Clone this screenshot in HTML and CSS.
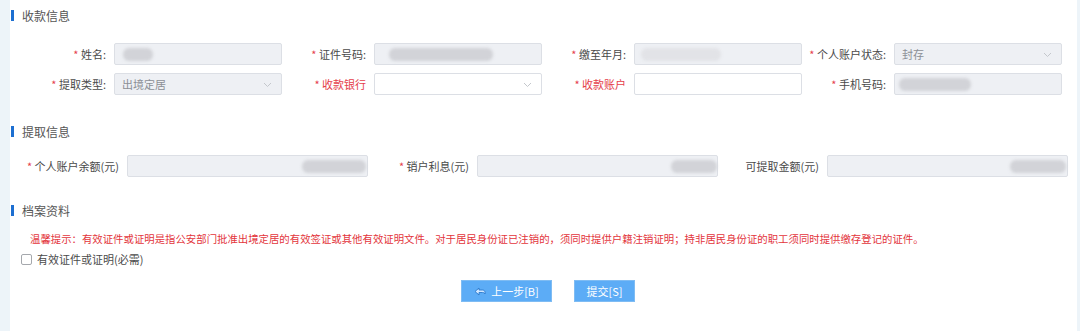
FILE: index.html
```html
<!DOCTYPE html>
<html lang="zh-CN">
<head>
    <meta charset="UTF-8">
    <title>提取申请</title>
    <link rel="stylesheet" href="styles.css">
</head>
<body>
    <div class="panel">
        <div class="sec-title">收款信息</div>
        <div class="grid4">
            <div class="field">
                <label><i>*</i> 姓名:</label>
                <div class="box disabled"><span class="blur" style="left:8px;width:30px"></span></div>
            </div>
            <div class="field">
                <label><i>*</i> 证件号码:</label>
                <div class="box disabled"><span class="blur" style="left:14px;width:104px"></span></div>
            </div>
            <div class="field">
                <label><i>*</i> 缴至年月:</label>
                <div class="box disabled"><span class="blur soft" style="left:6px;width:80px"></span></div>
            </div>
            <div class="field">
                <label><i>*</i> 个人账户状态:</label>
                <div class="box disabled select">封存<svg class="arrow" width="9" height="6" viewBox="0 0 9 6"><path d="M1 1l3.5 3.5L8 1" fill="none" stroke="#c4c7cc" stroke-width="1"/></svg></div>
            </div>
            <div class="field">
                <label><i>*</i> 提取类型:</label>
                <div class="box disabled select">出境定居<svg class="arrow" width="9" height="6" viewBox="0 0 9 6"><path d="M1 1l3.5 3.5L8 1" fill="none" stroke="#c4c7cc" stroke-width="1"/></svg></div>
            </div>
            <div class="field">
                <label class="red"><i>*</i> 收款银行</label>
                <div class="box select"><svg class="arrow" width="9" height="6" viewBox="0 0 9 6"><path d="M1 1l3.5 3.5L8 1" fill="none" stroke="#c4c7cc" stroke-width="1"/></svg></div>
            </div>
            <div class="field">
                <label class="red"><i>*</i> 收款账户</label>
                <div class="box"></div>
            </div>
            <div class="field">
                <label><i>*</i> 手机号码:</label>
                <div class="box disabled"><span class="blur" style="left:4px;width:72px"></span></div>
            </div>
        </div>

        <div class="sec-title second">提取信息</div>
        <div class="grid3">
            <div class="field">
                <label><i>*</i> 个人账户余额(元)</label>
                <div class="box disabled"><span class="blur" style="left:174px;width:64px"></span></div>
            </div>
            <div class="field">
                <label><i>*</i> 销户利息(元)</label>
                <div class="box disabled"><span class="blur" style="left:193px;width:46px"></span></div>
            </div>
            <div class="field">
                <label>可提取金额(元)</label>
                <div class="box disabled"><span class="blur" style="left:182px;width:56px"></span></div>
            </div>
        </div>

        <div class="sec-title third">档案资料</div>
        <p class="tip">温馨提示：有效证件或证明是指公安部门批准出境定居的有效签证或其他有效证明文件。对于居民身份证已注销的，须同时提供户籍注销证明；持非居民身份证的职工须同时提供缴存登记的证件。</p>
        <div class="check">
            <span class="checkbox"></span>
            <span>有效证件或证明(必需)</span>
        </div>

        <div class="actions">
            <button class="btn back" type="button">
                <svg width="12" height="10" viewBox="0 0 12 10"><path d="M1 5.5L5 2v2h3.5c1.5 0 2.5 1 2.5 2.5V8c-.5-1-1.3-1.5-2.5-1.5H5v2.5z" fill="#cfe6ff" stroke="#2a78cc" stroke-width="0.9" stroke-linejoin="round"/></svg>
                上一步[B]
            </button>
            <button class="btn submit" type="button">提交[S]</button>
        </div>
    </div>
</body>
</html>
```

FILE: styles.css
```css
body {
    margin: 0;
    background-color: #edf4f9;
    font-family: "Noto Sans CJK SC", "Microsoft YaHei", sans-serif;
    color: #555;
}
.panel {
    margin: 0 3px 0 10px;
    height: 331px;
    padding-top: 5px;
    box-sizing: border-box;
    background: #fff;
}
.sec-title {
    display: flex;
    align-items: center;
    height: 20px;
    padding-left: 1px;
    font-size: 12px;
    color: #555;
}
.sec-title::before {
    content: "";
    width: 3px;
    height: 11px;
    margin-right: 8px;
    background: #1d6fd1;
}
.second {
    margin-top: 26px;
}
.third {
    margin-top: 23px;
}
.grid4 {
    display: grid;
    grid-template-columns: repeat(4, 260px);
    row-gap: 8px;
    margin-top: 18px;
    padding-left: 12px;
}
.grid3 {
    display: grid;
    grid-template-columns: repeat(3, 350px);
    margin-top: 14px;
    padding-left: 8px;
}
.field {
    display: flex;
    align-items: center;
}
.field label {
    flex: 1;
    text-align: right;
    padding-right: 8px;
    font-size: 11px;
    white-space: nowrap;
    color: #4a4a4a;
}
.field label i {
    font-style: normal;
    color: #e5404b;
}
.field label.red {
    color: #e5404b;
}
.grid4 .box {
    width: 168px;
}
.grid3 .box {
    width: 241px;
}
.box {
    position: relative;
    height: 22px;
    box-sizing: border-box;
    border: 1px solid #dcdfe5;
    border-radius: 2px;
    background: #fff;
    display: flex;
    align-items: center;
    padding-left: 7px;
    font-size: 11px;
    color: #8c8f96;
}
.box.disabled {
    background: #eef0f4;
}
.arrow {
    position: absolute;
    right: 9px;
    top: 8px;
}
.blur {
    position: absolute;
    top: 4px;
    height: 13px;
    border-radius: 6px;
    background: #d2d3d8;
    filter: blur(1.5px);
}
.blur.soft {
    background: #e2e3e7;
}
.tip {
    margin: 11px 0 0 0;
    padding-left: 20px;
    font-size: 10.4px;
    line-height: 16px;
    color: #e3353c;
    white-space: nowrap;
}
.check {
    display: flex;
    align-items: center;
    margin-top: 5px;
    padding-left: 11px;
    height: 14px;
    font-size: 11px;
    color: #4a4a4a;
}
.checkbox {
    width: 11px;
    height: 11px;
    box-sizing: border-box;
    border: 1px solid #a5a8ad;
    border-radius: 2px;
    margin-right: 5px;
}
.actions {
    display: flex;
    justify-content: center;
    gap: 22px;
    margin-top: 14px;
    padding-left: 9px;
}
.btn {
    display: flex;
    align-items: center;
    justify-content: center;
    gap: 5px;
    height: 22px;
    padding: 0;
    border: 1px solid #7fbcf3;
    background: #5cacf6;
    color: #fff;
    font-family: inherit;
    font-size: 11px;
    white-space: nowrap;
}
.back {
    width: 91px;
}
.submit {
    width: 61px;
}
```
